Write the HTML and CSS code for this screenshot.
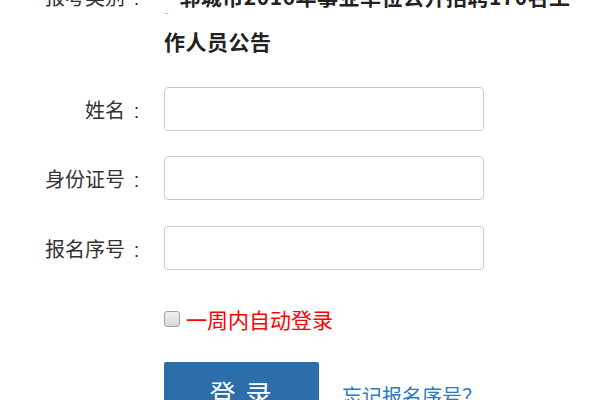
FILE: index.html
```html
<!DOCTYPE html>
<html lang="zh-CN">
<head>
<meta charset="utf-8">
<title>登录</title>
<link rel="stylesheet" href="styles.css">
</head>
<body>
<form class="form">
  <div class="row row-cat">
    <div class="label">报考类别<span class="colon">:</span></div>
    <div class="value"><span class="mark">-</span>郓城市2016年事业单位公开招聘170名工作人员公告</div>
  </div>
  <div class="row row-input row-first">
    <label class="label">姓名<span class="colon">:</span></label>
    <input class="field" type="text">
  </div>
  <div class="row row-input">
    <label class="label">身份证号<span class="colon">:</span></label>
    <input class="field" type="text">
  </div>
  <div class="row row-input row-last">
    <label class="label">报名序号<span class="colon">:</span></label>
    <input class="field" type="text">
  </div>
  <div class="row row-check">
    <span class="check"></span>
    <span class="check-text">一周内自动登录</span>
  </div>
  <div class="row row-actions">
    <button class="btn" type="button">登 录</button>
    <a class="link" href="#">忘记报名序号？</a>
  </div>
</form>
</body>
</html>
```
FILE: styles.css
```css
html, body {
  margin: 0;
  padding: 0;
  background: #fff;
}
body {
  font-family: "Noto Sans CJK SC", "Noto Sans", sans-serif;
  color: #333;
  overflow: hidden;
}
.form {
  margin-top: -26px;
}
.row {
  display: flex;
  align-items: center;
}
.label {
  width: 148px;
  flex: none;
  text-align: right;
  font-size: 20px;
  color: #333;
}
.colon {
  display: inline-block;
  width: 23px;
  text-align: center;
  font-family: "Liberation Sans", sans-serif;
  font-size: 20px;
}
.row-cat {
  align-items: flex-start;
  line-height: 45px;
}
.value {
  margin-left: 16px;
  width: 420px;
  font-size: 21px;
  font-weight: bold;
  letter-spacing: 0.5px;
  color: #222;
}
.mark {
  display: inline-block;
  font-size: 14px;
  font-weight: normal;
  color: #bbb;
  vertical-align: -12px;
  line-height: 1;
  margin-right: 10px;
}
.row-input {
  margin-top: 25px;
}
.row-first {
  margin-top: 23px;
}
.row-last {
  margin-top: 26px;
}
.field {
  margin: 0 0 0 16px;
  width: 320px;
  height: 44px;
  box-sizing: border-box;
  border: 1px solid #ccc;
  border-radius: 4px;
  padding: 0 10px;
  font-size: 18px;
  outline: none;
}
.row-check {
  margin-top: 34px;
  padding-left: 164px;
  height: 30px;
}
.check {
  width: 16px;
  height: 16px;
  box-sizing: border-box;
  border: 1px solid #a0a0a0;
  border-radius: 3px;
  background: linear-gradient(#f2f2f2, #d8d8d8);
  flex: none;
}
.check-text {
  margin-left: 6px;
  font-size: 21px;
  color: #f00;
}
.row-actions {
  margin-top: 28px;
  padding-left: 164px;
  align-items: flex-start;
}
.btn {
  width: 155px;
  height: 60px;
  border: none;
  border-radius: 2px;
  background: #2c6ea9;
  color: #fff;
  font-family: inherit;
  font-size: 26px;
  letter-spacing: 2px;
  padding: 0;
}
.link {
  margin-left: 23px;
  margin-top: 19px;
  font-size: 20px;
  color: #2a7bc1;
  text-decoration: none;
}
```
